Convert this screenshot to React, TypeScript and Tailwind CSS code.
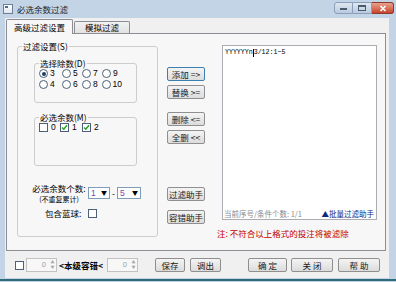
import React from "react";

function Btn({ label, w, focus }: { label: string; w: string; focus?: boolean }) {
    return (
        <button
            className={`${w} h-[14px] shrink-0 rounded-[2px] border ${focus ? "border-[#3c7fb1]" : "border-[#8f8f8f]"} bg-linear-to-b from-[#f4f4f4] to-[#dcdcdc] text-[8.5px] leading-none text-[#1a1a1a] whitespace-pre flex items-center justify-center`}
        >
            {label}
        </button>
    );
}

function Radio({ label, checked }: { label: string; checked?: boolean }) {
    return (
        <div className="flex items-center gap-[2px]">
            <span className="w-[9px] h-[9px] rounded-full border border-[#4d6078] bg-white flex items-center justify-center">
                {checked && <span className="w-[4px] h-[4px] rounded-full bg-[#1b3f66]" />}
            </span>
            <span className="text-[8.5px] leading-none">{label}</span>
        </div>
    );
}

function Check({ label, checked }: { label?: string; checked?: boolean }) {
    return (
        <div className="flex items-center gap-[3px]">
            <span className="w-[9px] h-[9px] border border-[#4d6078] bg-white flex items-center justify-center">
                {checked && (
                    <svg width="7" height="7" viewBox="0 0 7 7">
                        <path d="M1 3.5 L2.8 5.3 L6 1.3" fill="none" stroke="#21a121" strokeWidth="1.4" />
                    </svg>
                )}
            </span>
            {label && <span className="text-[8.5px] leading-none">{label}</span>}
        </div>
    );
}

function Select({ value, w }: { value: string; w: string }) {
    return (
        <div className={`${w} h-[12px] border border-[#7f9db9] bg-white flex items-center pl-[2px] pr-[2px]`}>
            <span className="text-[8.5px] leading-none text-[#7b3fa8] font-['Liberation_Sans',sans-serif]">{value}</span>
            <span className="ml-auto text-[6px] leading-none">▼</span>
        </div>
    );
}

function Spin() {
    return (
        <div className="w-[31px] h-[14px] border border-[#c2c2c2] bg-[#f7f7f7] flex items-center">
            <span className="ml-auto mr-[3px] text-[7.5px] leading-none text-[#a0a0a0] font-['Liberation_Sans',sans-serif]">0</span>
            <div className="w-[7px] h-full flex flex-col items-center justify-center text-[#a6a6a6] text-[4px] leading-[5px]">
                <span>▲</span>
                <span>▼</span>
            </div>
        </div>
    );
}

export default function App() {
    return (
        <div className="w-[396px] h-[282px] bg-[#c3d4e7] flex flex-col overflow-hidden text-black font-['Noto_Sans_CJK_SC','Noto_Sans',sans-serif]">
            {/* title bar */}
            <div className="h-[18px] flex items-start shrink-0">
                <div className="mt-[4px] ml-[3px] w-[10px] h-[10px] border border-[#6d7f94] bg-linear-to-b from-white to-[#dfe6ee] flex items-start">
                    <span className="mt-[1px] ml-[1px] w-[3px] h-[2px] bg-[#3d6fb0]" />
                </div>
                <span className="ml-[4px] mt-[4px] text-[8.5px] leading-[10px] text-[#1e1e1e]">必选余数过滤</span>
                <div className="ml-auto mr-[2px] mt-[2px] flex">
                    <div className="w-[19px] h-[12px] rounded-l-[3px] border border-[#8aa0ba] bg-linear-to-b from-[#dfe8f3] to-[#b9cade] flex items-end justify-center pb-[3px]">
                        <span className="w-[7px] h-[2px] bg-[#4b5a6b]" />
                    </div>
                    <div className="w-[19px] h-[12px] border border-l-0 border-[#8aa0ba] bg-linear-to-b from-[#dfe8f3] to-[#b9cade] flex items-center justify-center">
                        <span className="w-[8px] h-[6px] border border-t-2 border-[#4b5a6b]" />
                    </div>
                    <div className="w-[22px] h-[12px] rounded-r-[3px] border border-l-0 border-[#8c3a2e] bg-linear-to-b from-[#e8a08d] to-[#c7432c] flex items-center justify-center">
                        <svg width="8" height="7" viewBox="0 0 8 7">
                            <path d="M1.5 1 L6.5 6 M6.5 1 L1.5 6" stroke="white" strokeWidth="1.6" />
                        </svg>
                    </div>
                </div>
            </div>

            {/* client area */}
            <div className="h-[260px] ml-[5px] mr-[7px] bg-[#f0f0f0] flex flex-col shrink-0">
                {/* tabs */}
                <div className="h-[16px] -mb-px flex items-end pl-[1px] relative z-10">
                    <div className="h-[15px] w-[67px] border border-b-0 border-[#8c8e94] rounded-t-[2px] bg-[#f7f7f7] flex items-center justify-center text-[8.5px] leading-none">
                        高级过滤设置
                    </div>
                    <div className="h-[12px] w-[56px] mb-[1px] ml-[1px] border border-b-0 border-[#8c8e94] rounded-t-[2px] bg-linear-to-b from-[#f2f2f2] to-[#e2e2e2] flex items-center justify-center text-[8.5px] leading-none">
                        模拟过滤
                    </div>
                </div>

                {/* tab panel */}
                <div className="ml-[1px] w-[380px] h-[218px] border border-[#8c8e94] bg-[#f7f7f7] flex shrink-0">
                    {/* left group */}
                    <fieldset className="ml-[10px] mt-[7px] w-[141px] h-[196px] border border-[#cdcdcd] rounded-[3px] shrink-0">
                        <legend className="ml-[4px] px-[1px] text-[8.5px] leading-[10px]">过滤设置(S)</legend>
                        <div className="flex flex-col">
                            <fieldset className="ml-[16px] mt-[7px] w-[103px] h-[45px] border border-[#cdcdcd] rounded-[3px]">
                                <legend className="ml-[4px] px-[1px] text-[8.5px] leading-[10px]">选择除数(D)</legend>
                                <div className="ml-[4px] grid grid-cols-[23px_20px_20px_20px] grid-rows-[11px_11px] items-center font-['Liberation_Sans',sans-serif]">
                                    <Radio label="3" checked />
                                    <Radio label="5" />
                                    <Radio label="7" />
                                    <Radio label="9" />
                                    <Radio label="4" />
                                    <Radio label="6" />
                                    <Radio label="8" />
                                    <Radio label="10" />
                                </div>
                            </fieldset>
                            <fieldset className="ml-[16px] mt-[9px] w-[103px] h-[54px] border border-[#cdcdcd] rounded-[3px]">
                                <legend className="ml-[4px] px-[1px] text-[8.5px] leading-[10px]">必选余数(M)</legend>
                                <div className="ml-[4px] mt-[1px] grid grid-cols-[21px_22px_22px] items-center font-['Liberation_Sans',sans-serif]">
                                    <Check label="0" />
                                    <Check label="1" checked />
                                    <Check label="2" checked />
                                </div>
                            </fieldset>
                            <div className="mt-[16px] flex items-center">
                                <div className="ml-[11px] w-[60px] flex flex-col items-center">
                                    <span className="text-[8.5px] leading-[12px]">必选余数个数:</span>
                                    <span className="text-[7px] leading-[10px]">(不重复累计)</span>
                                </div>
                                <div className="ml-[-1px]">
                                    <Select value="1" w="w-[22px]" />
                                </div>
                                <span className="mx-[2px] text-[8.5px] leading-none">-</span>
                                <Select value="5" w="w-[24px]" />
                            </div>
                            <div className="mt-[5px] flex items-center">
                                <span className="ml-[27px] w-[43px] text-[8.5px] leading-none">包含蓝球:</span>
                                <Check />
                            </div>
                        </div>
                    </fieldset>

                    {/* middle buttons */}
                    <div className="ml-[9px] w-[38px] flex flex-col shrink-0">
                        <div className="mt-[33px]">
                            <Btn label="添加 =>" w="w-[38px]" focus />
                        </div>
                        <div className="mt-[4px]">
                            <Btn label="替换 >=" w="w-[38px]" />
                        </div>
                        <div className="mt-[13px]">
                            <Btn label="删除 <=" w="w-[38px]" />
                        </div>
                        <div className="mt-[4px]">
                            <Btn label="全删 <<" w="w-[38px]" />
                        </div>
                        <div className="mt-[43px]">
                            <Btn label="过滤助手" w="w-[38px]" />
                        </div>
                        <div className="mt-[9px]">
                            <Btn label="容错助手" w="w-[38px]" />
                        </div>
                    </div>

                    {/* right */}
                    <div className="ml-[12px] flex flex-col shrink-0">
                        <div className="ml-[5px] mt-[11px] w-[155px] h-[175px] border border-[#abadb3] bg-white flex flex-col">
                            <div className="pl-[2px] pt-[3px] text-[6.6px] leading-[8px] font-['Liberation_Mono',monospace] flex items-center">
                                <span>YYYYYYn</span>
                                <span className="w-px h-[8px] bg-black" />
                                <span>3/12:1~5</span>
                            </div>
                            <div className="mt-auto h-[11px] flex items-center px-[1px] text-[7.5px] leading-none">
                                <span className="text-[#8a8a8a]">当前序号/条件个数: 1/1</span>
                                <span className="ml-auto mr-[1px] text-[#0a2a8a]">▲批量过滤助手</span>
                            </div>
                        </div>
                        <div className="mt-[8px] text-[8.5px] leading-[10px] text-[#c00000]">注: 不符合以上格式的投注将被滤除</div>
                    </div>
                </div>

                {/* bottom row */}
                <div className="mt-[7px] h-[14px] flex items-center shrink-0">
                    <div className="ml-[10px]">
                        <Check />
                    </div>
                    <div className="ml-[2px]">
                        <Spin />
                    </div>
                    <span className="ml-[2px] w-[48px] text-[8.5px] leading-none font-bold whitespace-nowrap">&lt;本级容错&lt;</span>
                    <Spin />
                    <div className="ml-[17px]">
                        <Btn label="保存" w="w-[30px]" />
                    </div>
                    <div className="ml-[5px]">
                        <Btn label="调出" w="w-[31px]" />
                    </div>
                    <div className="ml-[27px]">
                        <Btn label="确 定" w="w-[39px]" />
                    </div>
                    <div className="ml-[4px]">
                        <Btn label="关 闭" w="w-[42px]" />
                    </div>
                    <div className="ml-[5px]">
                        <Btn label="帮 助" w="w-[42px]" />
                    </div>
                </div>
            </div>

            {/* bottom frame */}
            <div className="h-[1px] shrink-0" />
            <div className="h-[2px] bg-[#2d6a7a] shrink-0" />
        </div>
    );
}
